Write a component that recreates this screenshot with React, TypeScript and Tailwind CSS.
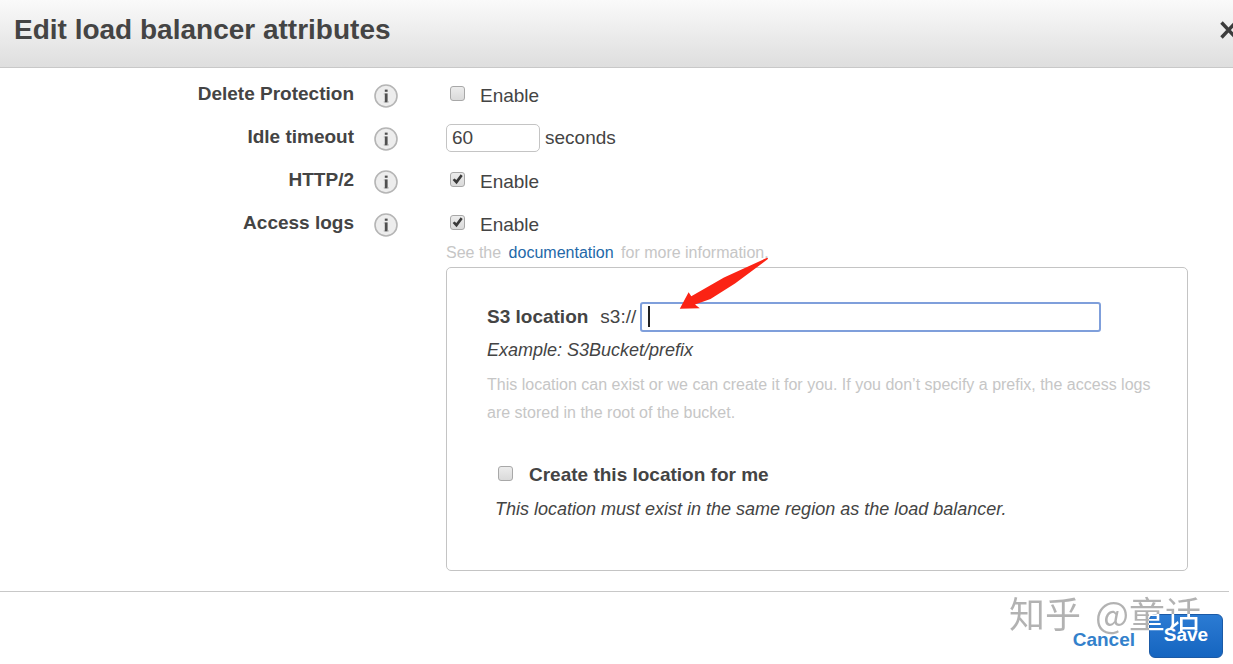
import { useState, type ReactNode } from "react";

function InfoButton({ label }: { label: string }) {
  return (
    <button type="button" aria-label={`About ${label}`} className="ml-5 shrink-0">
      <svg width="24" height="24" viewBox="0 0 24 24" className="block">
        <circle cx="12" cy="12" r="11" fill="#ededed" stroke="#b5b5b5" strokeWidth="1.6" />
        <rect x="10.8" y="5.6" width="2.8" height="2.2" fill="#505050" />
        <path d="M10.8 9.4h2.8v9h-2.8z" fill="#505050" />
        <path d="M9.8 9.4h1v1.2h-1zM9.8 17.2h1v1.2h-1zM13.6 17.2h1v1.2h-1z" fill="#a5a5a5" />
      </svg>
    </button>
  );
}

function Checkbox({ id, initial = false }: { id: string; initial?: boolean }) {
  const [checked, setChecked] = useState(initial);
  return (
    <span className="relative block size-[15px] shrink-0">
      <input
        id={id}
        type="checkbox"
        checked={checked}
        onChange={(e) => setChecked(e.target.checked)}
        className="block size-full appearance-none rounded-[3px] border border-[#a8a8a8] bg-linear-to-b from-[#ececec] to-[#dadada]"
      />
      {checked && (
        <svg viewBox="0 0 15 15" className="pointer-events-none absolute inset-0 size-full">
          <path d="M2.6 8l1.9-1.6 1.9 1.7L10.7 2.3l2 1.7L6.6 12.2z" fill="#3a3a3a" />
        </svg>
      )}
    </span>
  );
}

function Row({ label, htmlFor, children }: { label: string; htmlFor: string; children: ReactNode }) {
  return (
    <div className="flex h-[43px] items-center">
      <label htmlFor={htmlFor} className="mb-[3px] w-[354px] shrink-0 text-right font-bold">
        {label}
      </label>
      <InfoButton label={label} />
      <div className="ml-12 flex items-center">{children}</div>
    </div>
  );
}

function EnableBox({ id, initial }: { id: string; initial?: boolean }) {
  return (
    <div className="ml-1 flex items-center">
      <span className="mb-1">
        <Checkbox id={id} initial={initial} />
      </span>
      <label htmlFor={id} className="ml-[15px]">
        Enable
      </label>
    </div>
  );
}

export default function App() {
  const [timeout, setTimeoutValue] = useState("60");
  const [location, setLocation] = useState("");
  return (
    <div className="overflow-hidden bg-white font-['Liberation_Sans',Arial,sans-serif] text-[19px] leading-6 text-[#444]">
      <header className="flex h-[68px] items-center justify-between border-b border-[#c8c8c8] bg-linear-to-b from-[#fafafa] to-[#dedede] pb-2 pl-3.5">
        <h1 className="text-[28px] leading-8 font-bold">Edit load balancer attributes</h1>
        <button type="button" aria-label="Close" className="-mr-1 shrink-0">
          <svg width="17" height="18" viewBox="0 0 17 18" className="block">
            <path d="M1.5 1.5l14 15M15.5 1.5l-14 15" stroke="#3c3c3c" strokeWidth="3.4" />
          </svg>
        </button>
      </header>

      <main>
        <form className="pt-1.5" id="attributes" onSubmit={(e) => e.preventDefault()}>
          <Row label="Delete Protection" htmlFor="delete-protection">
            <EnableBox id="delete-protection" />
          </Row>
          <Row label="Idle timeout" htmlFor="idle-timeout">
            <input
              id="idle-timeout"
              type="text"
              value={timeout}
              onChange={(e) => setTimeoutValue(e.target.value)}
              className="mb-0.5 h-7 w-[94px] rounded-[5px] border border-[#c4c4c4] px-[5px]"
            />
            <span className="mb-0.5 ml-[5px]">seconds</span>
          </Row>
          <Row label="HTTP/2" htmlFor="http2">
            <EnableBox id="http2" initial />
          </Row>
          <Row label="Access logs" htmlFor="access-logs">
            <EnableBox id="access-logs" initial />
          </Row>

          <div className="-mt-[3px] mr-[45px] ml-[446px]">
            <p className="pb-1 text-base leading-5 text-[#c6c6c6]">
              See the{" "}
              <a href="#documentation" className="mx-[3px] text-[#2368a8]">
                documentation
              </a>{" "}
              for more information.
            </p>
            <section className="relative h-[304px] rounded-[5px] border border-[#c4c4c4] pt-[34px] pr-6 pl-10">
              <div className="flex items-center">
                <label htmlFor="s3-location" className="font-bold">
                  S3 location
                </label>
                <span className="ml-3">s3://</span>
                <span className="relative ml-1 block w-[461px]">
                  <input
                    id="s3-location"
                    type="text"
                    value={location}
                    onChange={(e) => setLocation(e.target.value)}
                    className="block h-[30px] w-full rounded-[3px] border-2 border-[#7f9fdb] px-1.5 outline-none"
                  />
                  {location === "" && (
                    <span className="pointer-events-none absolute top-1 left-2 h-[21px] w-0.5 bg-[#222]" />
                  )}
                </span>
              </div>
              <p className="mt-1.5 text-lg leading-6 italic">Example: S3Bucket/prefix</p>
              <p className="mt-[9px] text-base leading-7 text-[#c6c6c6]">
                This location can exist or we can create it for you. If you don’t specify a prefix, the access logs are
                stored in the root of the bucket.
              </p>
              <div className="mt-9 ml-[11px] flex items-center">
                <span className="mb-1">
                  <Checkbox id="create-location" />
                </span>
                <label htmlFor="create-location" className="ml-4 font-bold">
                  Create this location for me
                </label>
              </div>
              <p className="mt-2.5 ml-2 text-lg leading-6 italic">
                This location must exist in the same region as the load balancer.
              </p>
              <svg
                width="90"
                height="54"
                viewBox="0 0 90 54"
                className="pointer-events-none absolute -top-[11px] left-[232px]"
              >
                <path
                  d="M0.8 51.8L9.6 35.2L12.3 39.3L45 20.5L88.2 0.7L89.2 1.8L56 26.5L31.5 42L16 47.6L20.8 51.2z"
                  fill="#fb2314"
                />
              </svg>
            </section>
          </div>
        </form>
      </main>

      <footer className="relative mt-5 mr-1 flex items-center justify-end border-t border-[#c8c8c8] pt-[22px] pr-1.5 pb-1.5">
        <button type="button" className="mt-2 font-bold text-[#3381cb]">
          Cancel
        </button>
        <button
          type="submit"
          form="attributes"
          className="ml-3.5 h-11 w-[74px] rounded-md border border-[#1b5aa6] bg-linear-to-b from-[#2b7bd3] to-[#1565c0] pb-0.5 font-bold text-white"
        >
          Save
        </button>
        <span className="pointer-events-none absolute -top-1 right-7 flex gap-3.5 bg-[#b2b2b2] bg-[linear-gradient(white,white)] bg-[length:52px_22px] bg-clip-text bg-right-bottom bg-no-repeat font-['Noto_Sans_CJK_SC',sans-serif] text-4xl leading-[48px] whitespace-nowrap text-transparent">
          <span>知乎</span>
          <span>@童话</span>
        </span>
      </footer>
    </div>
  );
}
